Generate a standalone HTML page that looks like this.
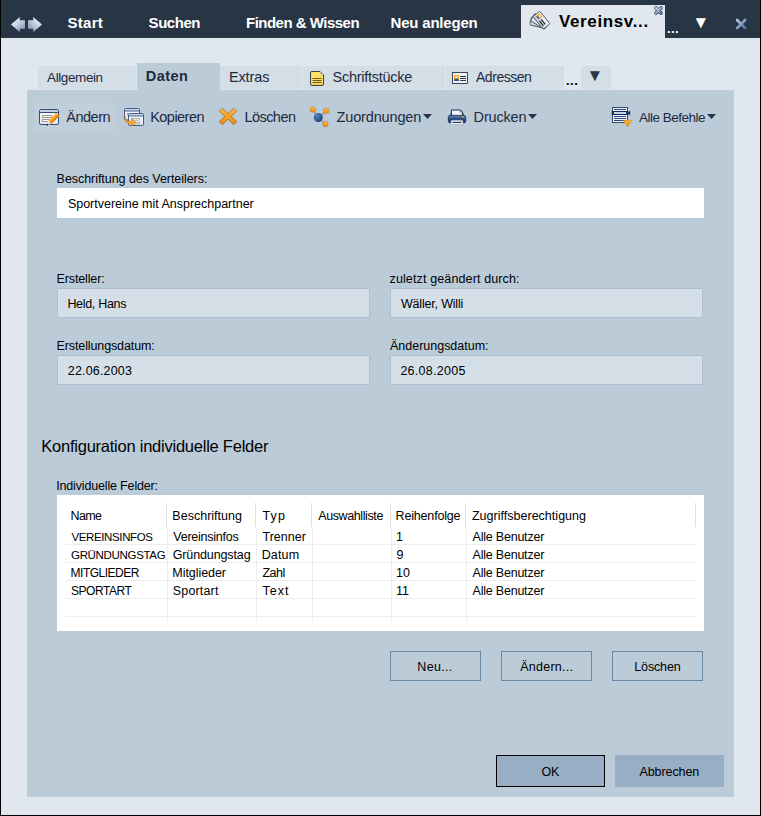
<!DOCTYPE html>
<html lang="de">
<head>
<meta charset="utf-8">
<title>Vereinsverteiler</title>
<style>
html,body{margin:0;padding:0;}
body{width:761px;height:816px;overflow:hidden;background:#e0e7ee;position:relative;
 font-family:"Liberation Sans","DejaVu Sans",sans-serif;font-size:12px;color:#000;}
.a{position:absolute;}
.t{position:absolute;white-space:nowrap;line-height:1;}
svg{position:absolute;overflow:visible;}
#bl{left:0;top:0;width:1px;height:816px;background:#000;}
#br{left:760px;top:0;width:1px;height:816px;background:#000;}
#bb{left:0;top:815px;width:761px;height:1px;background:#000;}
#topbar{left:1px;top:0;width:759px;height:38px;background:#283545;}
#acttab{left:521px;top:5px;width:144px;height:33px;background:#e0e7ee;}
.tab2{top:66px;height:23px;background:#d3dee7;}
#tabD{left:137px;top:63px;width:83px;height:27px;background:#bbcbd8;}
#panel{left:27px;top:90px;width:707px;height:707px;background:#bbcbd8;}
#hl{left:34px;top:103px;width:81px;height:27px;background:#c1cfdb;}
.in{background:#fff;}
.ro{background:#d5dfe8;border:1px solid #adbfce;box-sizing:border-box;}
.btn{box-sizing:border-box;border:1px solid #6a88a6;height:30px;width:91px;top:651px;}
.hl{background:#ededed;height:1px;left:65px;width:631px;}
.vl{background:#eeeeee;width:1px;top:527px;height:96px;}
.vh{background:#e0e0e0;width:1px;top:503px;height:24px;}
</style>
</head>
<body>
<div class="a" id="topbar"></div>
<div class="a" id="acttab"></div>
<!-- second-level tabs -->
<div class="a tab2" style="left:38px;width:98px;"></div>
<div class="a" id="tabD"></div>
<div class="a tab2" style="left:220px;width:82px;"></div>
<div class="a tab2" style="left:303px;width:142px;"></div>
<div class="a tab2" style="left:446px;width:118px;"></div>
<div class="a tab2" style="left:581px;width:30px;"></div>
<div class="a" id="panel"></div>
<div class="a" id="hl"></div>
<!-- form fields -->
<div class="a in" style="left:57px;top:188px;width:647px;height:30px;"></div>
<div class="a ro" style="left:57px;top:288px;width:313px;height:30px;"></div>
<div class="a ro" style="left:390px;top:288px;width:313px;height:30px;"></div>
<div class="a ro" style="left:57px;top:355px;width:313px;height:30px;"></div>
<div class="a ro" style="left:390px;top:355px;width:313px;height:30px;"></div>
<!-- table -->
<div class="a in" style="left:57px;top:495px;width:647px;height:136px;"></div>
<div class="a hl" style="top:544px;"></div><div class="a hl" style="top:562px;"></div>
<div class="a hl" style="top:580px;"></div><div class="a hl" style="top:598px;"></div>
<div class="a hl" style="top:616px;"></div>
<div class="a vl" style="left:167px;"></div><div class="a vl" style="left:256px;"></div>
<div class="a vl" style="left:312px;"></div><div class="a vl" style="left:391px;"></div>
<div class="a vl" style="left:466px;"></div>
<div class="a vh" style="left:166px;"></div><div class="a vh" style="left:255px;"></div>
<div class="a vh" style="left:311px;"></div><div class="a vh" style="left:390px;"></div>
<div class="a vh" style="left:465px;"></div><div class="a vh" style="left:695px;"></div>
<!-- buttons -->
<div class="a btn" style="left:390px;"></div>
<div class="a btn" style="left:501px;"></div>
<div class="a btn" style="left:612px;"></div>
<div class="a" style="left:496px;top:755px;width:109px;height:32px;background:#98aec4;border:1px solid #000;box-sizing:border-box;"></div>
<div class="a" style="left:615px;top:755px;width:109px;height:32px;background:#98aec4;"></div>
<!--ICONS_START-->
<svg class="a" style="left:0;top:0" width="761" height="816" viewBox="0 0 761 816">
<defs>
<linearGradient id="gArr" x1="0" y1="0" x2="1" y2="1"><stop offset="0" stop-color="#ffffff"/><stop offset="0.45" stop-color="#c9d3e2"/><stop offset="1" stop-color="#7388a8"/></linearGradient>
<linearGradient id="gX" x1="0" y1="0" x2="1" y2="1"><stop offset="0" stop-color="#b4c6dc"/><stop offset="1" stop-color="#44699a"/></linearGradient>
<linearGradient id="gOr" x1="0" y1="0" x2="0" y2="1"><stop offset="0" stop-color="#fdb93c"/><stop offset="1" stop-color="#f18a17"/></linearGradient>
<linearGradient id="gYe" x1="0" y1="0" x2="0" y2="1"><stop offset="0" stop-color="#ffe566"/><stop offset="1" stop-color="#f3d25c"/></linearGradient>
<linearGradient id="gPr" x1="0" y1="0" x2="0" y2="1"><stop offset="0" stop-color="#7391b8"/><stop offset="0.45" stop-color="#214b82"/><stop offset="1" stop-color="#143663"/></linearGradient>
<radialGradient id="gBall" cx="0.35" cy="0.3" r="0.8"><stop offset="0" stop-color="#5d87b8"/><stop offset="1" stop-color="#183a6b"/></radialGradient>
<linearGradient id="gCard" x1="0" y1="0" x2="0" y2="1"><stop offset="0" stop-color="#fbfcfd"/><stop offset="1" stop-color="#c3ccd8"/></linearGradient>
<linearGradient id="gWin" x1="0" y1="0" x2="0" y2="1"><stop offset="0" stop-color="#ffffff"/><stop offset="1" stop-color="#e4e2f0"/></linearGradient>
<linearGradient id="gArr2" x1="1" y1="0" x2="0" y2="1"><stop offset="0" stop-color="#ffffff"/><stop offset="0.45" stop-color="#c9d3e2"/><stop offset="1" stop-color="#7388a8"/></linearGradient>
<linearGradient id="gCp" gradientUnits="userSpaceOnUse" x1="124.5" y1="114" x2="131" y2="123"><stop offset="0" stop-color="#7a3f08"/><stop offset="0.35" stop-color="#f08a14"/><stop offset="1" stop-color="#fbab2e"/></linearGradient>
<linearGradient id="gXs" gradientUnits="userSpaceOnUse" x1="655" y1="7" x2="662" y2="14"><stop offset="0" stop-color="#f2f6fb"/><stop offset="0.5" stop-color="#9db4d2"/><stop offset="1" stop-color="#3f68a0"/></linearGradient>
<linearGradient id="gXb" gradientUnits="userSpaceOnUse" x1="736" y1="19" x2="746" y2="29"><stop offset="0" stop-color="#c3d1e4"/><stop offset="1" stop-color="#456fa3"/></linearGradient>
</defs>

<!-- nav back/forward arrows -->
<path d="M11 24.5 L19.8 17 L19.8 20.3 L25 20.3 L25 28.7 L19.8 28.7 L19.8 32 Z" fill="url(#gArr)"/>
<path d="M42 24.5 L33.2 17 L33.2 20.3 L28 20.3 L28 28.7 L33.2 28.7 L33.2 32 Z" fill="url(#gArr2)"/>

<!-- active tab icon: fan of cards -->
<g stroke="#4b5566" stroke-width="0.9" fill="url(#gCard)">
 <rect x="-8.2" y="-4.3" width="16.4" height="8.6" rx="1.3" fill="#d3d9e2" transform="translate(538.6 22.6) rotate(14)"/>
 <rect x="-8.2" y="-4.3" width="16.4" height="8.6" rx="1.3" fill="#dde2ea" transform="translate(539.6 21.4) rotate(32)"/>
 <g transform="translate(541.5 20.2) rotate(51)">
  <rect x="-8.2" y="-4.3" width="16.4" height="8.6" rx="1.3"/>
  <rect x="-6.6" y="-2.8" width="4.4" height="4.4" fill="#f3a420" stroke="none"/>
  <circle cx="-4.4" cy="-1.2" r="1" fill="#e9eef6" stroke="none"/>
  <path d="M-6.4 1.8 Q-4.4 -1.6 -2.4 1.8 Z" fill="#2a5a9a" stroke="none"/>
  <path d="M-0.8 -0.3 H5.6 M-0.8 2 H5.6" stroke="#1a212c" stroke-width="1.2" fill="none"/>
 </g>
</g>

<!-- small close x on active tab -->
<g stroke-linecap="round">
<path d="M656 8 L661 13 M661 8 L656 13" stroke="#33435c" stroke-width="3.6"/>
<path d="M656 8 L661 13 M661 8 L656 13" stroke="url(#gXs)" stroke-width="2.2"/>
</g>

<!-- big close X -->
<path d="M737.1 20 L745.2 28.1 M745.2 20 L737.1 28.1" stroke="url(#gXb)" stroke-width="2.7" stroke-linecap="round" fill="none"/>

<!-- Schriftstücke note icon -->
<path d="M311.5 71.5 H320 L323.5 75 V84 Q323.5 85.5 322 85.5 H312 Q310.5 85.5 310.5 84 V73 Q310.5 71.5 312 71.5 Z" fill="url(#gYe)" stroke="#3d424d" stroke-width="1"/>
<path d="M320 72 V75 H323 Z" fill="#d9cfa0"/>
<path d="M312.5 78.5 H321.5 M312.5 80.5 H321.5 M312.5 82.5 H321.5" stroke="#6e5d1f" stroke-width="1"/>

<!-- Adressen card icon -->
<rect x="452.5" y="72.5" width="15" height="11" fill="#eef1f6" stroke="#3a4556" stroke-width="1"/>
<rect x="454" y="75" width="5" height="6" fill="#f6a41e"/>
<circle cx="456.5" cy="77.2" r="1.15" fill="#e8eef7"/>
<path d="M454 81 V80 Q456.5 77.2 459 80 V81 Z" fill="#2a5591"/>
<path d="M460.2 76.5 H466 M460.2 78.5 H466 M460.2 80.5 H466" stroke="#2c3646" stroke-width="1"/>

<!-- Ändern: window + pencil -->
<rect x="39.5" y="109.5" width="19" height="15" rx="1.6" fill="url(#gWin)" stroke="#2f4f78" stroke-width="1"/>
<rect x="40" y="110" width="18" height="2" fill="#c2d0e4"/>
<path d="M40 112.5 H58" stroke="#2f4f78" stroke-width="1"/>
<rect x="42.5" y="115.5" width="9" height="2" fill="#fff" stroke="#9a9a9a" stroke-width="1"/>
<rect x="42.5" y="119.5" width="8" height="2" fill="#fff" stroke="#9a9a9a" stroke-width="1"/>
<g transform="translate(46.3 125.8) rotate(-45)">
 <path d="M5 -2.2 H16.2 V2.2 H5 Z" fill="#f59016"/>
 <path d="M5 -2.2 H16.2 V-0.6 H5 Z" fill="#ffc352"/>
 <path d="M5 1.1 H16.2 V2.2 H5 Z" fill="#e07d0c"/>
 <path d="M0 0 L5 -2.2 V2.2 Z" fill="#cfcfcf"/>
 <path d="M1.6 -0.7 L5 -2.2 V-0.3 Z" fill="#f4f4f4"/>
 <path d="M0 0 L2.3 -1 V1 Z" fill="#0c0c0c"/>
</g>

<!-- Kopieren: two windows + arrow -->
<rect x="124.5" y="108.5" width="15" height="11.5" rx="1.3" fill="url(#gWin)" stroke="#3f5f88" stroke-width="1"/>
<rect x="125" y="109" width="14" height="1.6" fill="#c2d0e4"/>
<path d="M125 111 H139" stroke="#3f5f88" stroke-width="1"/>
<rect x="127.5" y="113.5" width="8" height="2" fill="#fff" stroke="#a0a0a0" stroke-width="0.8"/>
<rect x="128.5" y="113.5" width="15" height="12" rx="1.3" fill="url(#gWin)" stroke="#3f5f88" stroke-width="1"/>
<rect x="129" y="114" width="14" height="1.6" fill="#c2d0e4"/>
<path d="M129 116 H143" stroke="#3f5f88" stroke-width="1"/>
<rect x="132.5" y="118.5" width="7" height="1.6" fill="#fff" stroke="#a0a0a0" stroke-width="0.8"/>
<rect x="132.5" y="122.2" width="7" height="1.6" fill="#fff" stroke="#a0a0a0" stroke-width="0.8"/>
<path d="M124.6 114.4 Q125 122 131.4 121.2 L131.4 118.3 L135.8 122.4 L131.2 126.4 L131.3 124 Q124.4 124.6 124.6 114.4 Z" fill="url(#gCp)" stroke="#b3620c" stroke-width="0.4"/>

<!-- Löschen: orange X -->
<path d="M222.2 108.2 L228 113.6 L233.8 108.2 L236.8 111.2 L231.2 116.4 L236.8 121.6 L233.8 124.7 L228 119.3 L222.2 124.7 L219.2 121.6 L224.8 116.4 L219.2 111.2 Z" fill="url(#gOr)" stroke="#7c4a12" stroke-opacity="0.75" stroke-width="0.7" stroke-linejoin="round"/>

<!-- Zuordnungen: network -->
<path d="M318.3 117.5 L312.8 109.6 M318.3 117.5 L326.2 110.9 M318.3 117.5 L325.4 124.1" stroke="#8592a3" stroke-width="1.1"/>
<circle cx="318.3" cy="117.5" r="4.5" fill="url(#gBall)"/>
<rect x="310.2" y="107" width="5.2" height="5.2" rx="1.7" fill="url(#gOr)" stroke="#a86a1a" stroke-width="0.4"/>
<rect x="323.6" y="108.3" width="5.2" height="5.2" rx="1.7" fill="url(#gOr)" stroke="#a86a1a" stroke-width="0.4"/>
<rect x="322.8" y="121.5" width="5.2" height="5.2" rx="1.7" fill="url(#gOr)" stroke="#a86a1a" stroke-width="0.4"/>

<!-- Drucken: printer -->
<path d="M449.6 116.5 L450.9 112.5 V109.5 H460.2 L462.8 112 L464.4 116.5 Z" fill="#1d3557"/>
<path d="M451.9 115.6 V110.4 H459.6 L462 112.7 V115.6 Z" fill="#f1f2f7"/>
<path d="M459.6 110.4 V112.7 H462 Z" fill="#aab3c2"/>
<rect x="448.3" y="115.3" width="17.4" height="7.8" rx="2" fill="url(#gPr)" stroke="#10294f" stroke-width="0.7"/>
<rect x="462" y="116.3" width="1.9" height="1.3" fill="#f6a21e"/>
<path d="M450.6 124.6 L451.4 120.3 H462.6 L463.4 124.6 Z" fill="#f4f5f9" stroke="#8d99aa" stroke-width="0.5"/>
<path d="M452.4 122.4 H461.6" stroke="#1b2f4a" stroke-width="1.1"/>

<!-- Alle Befehle: list + arrow -->
<rect x="612.5" y="107.5" width="15" height="15" fill="#f4f1f8" stroke="#3d4a5e" stroke-width="1"/>
<path d="M614 109.5 H626 M614 116.5 H626 M614 118.5 H626 M614 120.5 H626" stroke="#234c82" stroke-width="1"/>
<path d="M611.8 111 H628.4 V112.4 L630.2 110.6 V115.4 L628.4 113.6 V115 H611.8 Z" fill="#0d2a5e"/>
<rect x="613.8" y="112.2" width="12.4" height="1.6" fill="#fdfbff"/>
<path d="M623.2 120.2 H632.2 L627.7 126.9 Z" fill="url(#gOr)" stroke="#c9771a" stroke-width="0.4"/>

<!-- dropdown arrows -->
<path d="M423 114 H432 L427.5 119 Z" fill="#2a3446"/>
<path d="M528 114 H537 L532.5 119 Z" fill="#2a3446"/>
<path d="M707 114 H716 L711.5 119 Z" fill="#2a3446"/>
</svg>
<!--ICONS_END-->
<span class="t" style="left:67.6px;top:15.3px;font-size:15px;font-weight:bold;color:#fff;letter-spacing:0.26px;">Start</span>
<span class="t" style="left:148.6px;top:15.3px;font-size:15.0px;font-weight:bold;color:#fff;letter-spacing:-0.46px;">Suchen</span>
<span class="t" style="left:246.0px;top:15.3px;font-size:15.0px;font-weight:bold;color:#fff;letter-spacing:-0.51px;">Finden &amp; Wissen</span>
<span class="t" style="left:390.5px;top:15.3px;font-size:15px;font-weight:bold;color:#fff;letter-spacing:-0.19px;">Neu anlegen</span>
<span class="t" style="left:558.9px;top:12.6px;font-size:17px;font-weight:bold;letter-spacing:0.64px;">Vereinsv...</span>
<span class="t" style="left:667.0px;top:22.0px;font-size:13px;font-weight:bold;color:#fff;letter-spacing:0.44px;">...</span>
<span class="t" style="left:692.3px;top:14.0px;font-size:17.3px;color:#fff;">▼</span>
<span class="t" style="left:586.5px;top:68.4px;font-size:16.9px;color:#2a3446;">▼</span>
<span class="t" style="left:47.1px;top:70.8px;font-size:13.5px;color:#1f2a3e;letter-spacing:-0.41px;">Allgemein</span>
<span class="t" style="left:145.7px;top:69.0px;font-size:14.5px;font-weight:bold;color:#1f2a3e;letter-spacing:0.49px;">Daten</span>
<span class="t" style="left:228.9px;top:69.9px;font-size:14.5px;color:#1f2a3e;letter-spacing:-0.11px;">Extras</span>
<span class="t" style="left:332.6px;top:69.9px;font-size:14.5px;color:#1f2a3e;letter-spacing:-0.28px;">Schriftstücke</span>
<span class="t" style="left:476.0px;top:70.3px;font-size:14.0px;color:#1f2a3e;letter-spacing:-0.47px;">Adressen</span>
<span class="t" style="left:565.9px;top:74.0px;font-size:13px;font-weight:bold;letter-spacing:0.59px;">...</span>
<span class="t" style="left:66.3px;top:110.0px;font-size:14.5px;color:#1f2a3e;letter-spacing:-0.5px;">Ändern</span>
<span class="t" style="left:150.2px;top:110.0px;font-size:14.5px;color:#1f2a3e;letter-spacing:-0.53px;">Kopieren</span>
<span class="t" style="left:244.4px;top:110.0px;font-size:14.5px;color:#1f2a3e;letter-spacing:-0.54px;">Löschen</span>
<span class="t" style="left:336.6px;top:110.0px;font-size:14.5px;color:#1f2a3e;letter-spacing:-0.16px;">Zuordnungen</span>
<span class="t" style="left:473.6px;top:110.0px;font-size:14.5px;color:#1f2a3e;letter-spacing:-0.19px;">Drucken</span>
<span class="t" style="left:639.0px;top:110.9px;font-size:13.5px;color:#1f2a3e;letter-spacing:-0.5px;">Alle Befehle</span>
<span class="t" style="left:56.6px;top:173.0px;font-size:12.5px;letter-spacing:-0.05px;">Beschriftung des Verteilers:</span>
<span class="t" style="left:67.9px;top:198.0px;font-size:12.5px;letter-spacing:-0.01px;">Sportvereine mit Ansprechpartner</span>
<span class="t" style="left:56.6px;top:273.0px;font-size:12.5px;letter-spacing:-0.14px;">Ersteller:</span>
<span class="t" style="left:67.4px;top:298.0px;font-size:12.5px;letter-spacing:-0.31px;">Held, Hans</span>
<span class="t" style="left:56.6px;top:340.0px;font-size:12.5px;letter-spacing:-0.12px;">Erstellungsdatum:</span>
<span class="t" style="left:67.8px;top:365.0px;font-size:12.5px;letter-spacing:0.17px;">22.06.2003</span>
<span class="t" style="left:389.5px;top:273.0px;font-size:12.5px;letter-spacing:0.13px;">zuletzt geändert durch:</span>
<span class="t" style="left:401.0px;top:298.0px;font-size:12.5px;letter-spacing:-0.19px;">Wäller, Willi</span>
<span class="t" style="left:390.0px;top:340.0px;font-size:12.5px;letter-spacing:-0.01px;">Änderungsdatum:</span>
<span class="t" style="left:400.4px;top:365.0px;font-size:12.5px;letter-spacing:0.28px;">26.08.2005</span>
<span class="t" style="left:41.3px;top:437.6px;font-size:16.5px;letter-spacing:-0.24px;">Konfiguration individuelle Felder</span>
<span class="t" style="left:56.2px;top:480.0px;font-size:12.5px;letter-spacing:-0.16px;">Individuelle Felder:</span>
<span class="t" style="left:70.5px;top:510.0px;font-size:12.5px;letter-spacing:-0.6px;">Name</span>
<span class="t" style="left:172.3px;top:510.0px;font-size:12.5px;letter-spacing:0.02px;">Beschriftung</span>
<span class="t" style="left:262.5px;top:510.0px;font-size:12.5px;letter-spacing:1.1px;">Typ</span>
<span class="t" style="left:318.2px;top:510.0px;font-size:12.5px;letter-spacing:-0.39px;">Auswahlliste</span>
<span class="t" style="left:395.6px;top:510.0px;font-size:12.5px;letter-spacing:-0.18px;">Reihenfolge</span>
<span class="t" style="left:471.9px;top:510.0px;font-size:12.5px;letter-spacing:0.02px;">Zugriffsberechtigung</span>
<span class="t" style="left:71.5px;top:531.9px;font-size:11.5px;letter-spacing:-0.38px;">VEREINSINFOS</span>
<span class="t" style="left:173.3px;top:531.0px;font-size:12.5px;letter-spacing:-0.24px;">Vereinsinfos</span>
<span class="t" style="left:262.5px;top:531.0px;font-size:12.5px;letter-spacing:0.01px;">Trenner</span>
<span class="t" style="left:396.1px;top:531.0px;font-size:12.5px;">1</span>
<span class="t" style="left:472.5px;top:531.0px;font-size:12.5px;letter-spacing:-0.21px;">Alle Benutzer</span>
<span class="t" style="left:71.0px;top:549.9px;font-size:11.5px;letter-spacing:-0.32px;">GRÜNDUNGSTAG</span>
<span class="t" style="left:172.7px;top:549.0px;font-size:12.5px;letter-spacing:-0.12px;">Gründungstag</span>
<span class="t" style="left:261.7px;top:549.0px;font-size:12.5px;letter-spacing:0.15px;">Datum</span>
<span class="t" style="left:396.5px;top:549.0px;font-size:12.5px;">9</span>
<span class="t" style="left:472.5px;top:549.0px;font-size:12.5px;letter-spacing:-0.21px;">Alle Benutzer</span>
<span class="t" style="left:70.6px;top:567.4px;font-size:12.0px;letter-spacing:-0.5px;">MITGLIEDER</span>
<span class="t" style="left:172.3px;top:567.0px;font-size:12.5px;letter-spacing:-0.05px;">Mitglieder</span>
<span class="t" style="left:262.4px;top:567.0px;font-size:12.5px;letter-spacing:-0.51px;">Zahl</span>
<span class="t" style="left:396.1px;top:567.0px;font-size:12.5px;">10</span>
<span class="t" style="left:472.5px;top:567.0px;font-size:12.5px;letter-spacing:-0.21px;">Alle Benutzer</span>
<span class="t" style="left:71.0px;top:585.4px;font-size:12.0px;letter-spacing:-0.47px;">SPORTART</span>
<span class="t" style="left:172.8px;top:585.0px;font-size:12.5px;letter-spacing:0.16px;">Sportart</span>
<span class="t" style="left:262.5px;top:585.0px;font-size:12.5px;letter-spacing:1.02px;">Text</span>
<span class="t" style="left:396.1px;top:585.0px;font-size:12.5px;">11</span>
<span class="t" style="left:472.5px;top:585.0px;font-size:12.5px;letter-spacing:-0.21px;">Alle Benutzer</span>
<span class="t" style="left:417.3px;top:661.0px;font-size:12.5px;letter-spacing:0.34px;">Neu...</span>
<span class="t" style="left:520.3px;top:661.0px;font-size:12.5px;letter-spacing:0.23px;">Ändern...</span>
<span class="t" style="left:634.3px;top:661.0px;font-size:12.5px;letter-spacing:-0.15px;">Löschen</span>
<span class="t" style="left:541.5px;top:766.0px;font-size:12.5px;letter-spacing:-0.22px;">OK</span>
<span class="t" style="left:639.5px;top:766.0px;font-size:12.5px;letter-spacing:-0.09px;">Abbrechen</span>
<div class="a" id="bl"></div><div class="a" id="br"></div><div class="a" id="bb"></div>
</body>
</html>
